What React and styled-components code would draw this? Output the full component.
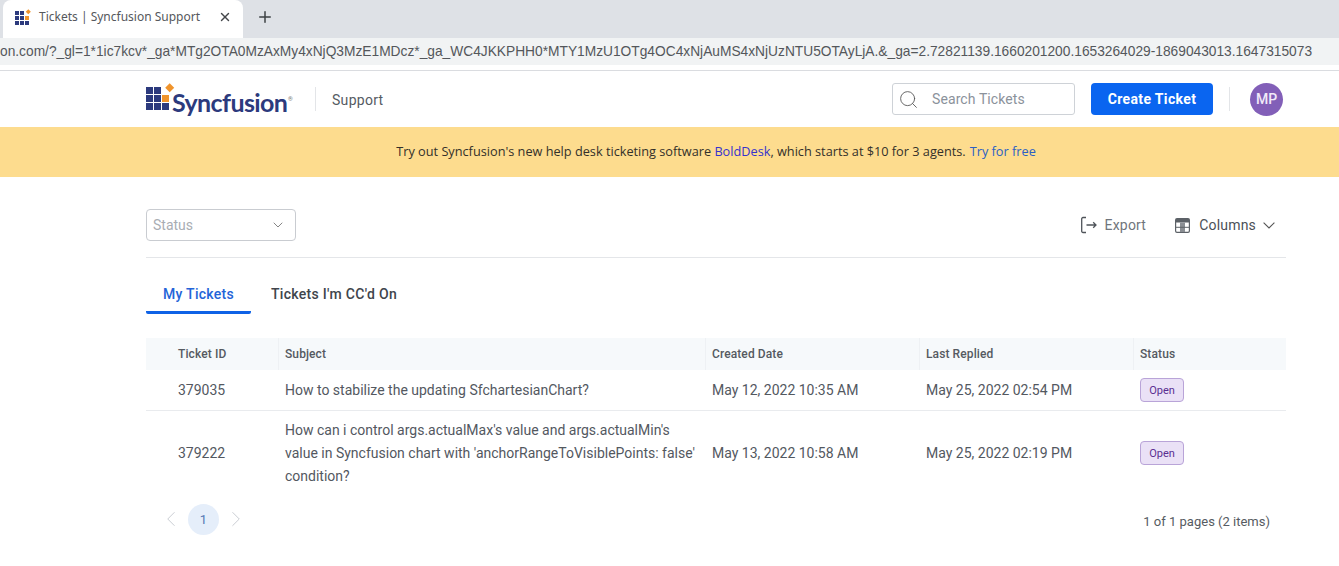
import React from 'react';
import styled, { createGlobalStyle } from 'styled-components';
import { ChevronDown, ChevronLeft, ChevronRight, Plus, Search, X } from 'lucide-react';

const GlobalStyle = createGlobalStyle`
  html, body {
    margin: 0;
    padding: 0;
    background: #fff;
    overflow: hidden;
  }
  * { box-sizing: border-box; }
  body { font-family: Roboto, "Liberation Sans", sans-serif; }
`;

const Page = styled.div`
  width: 1339px;
  height: 566px;
  overflow: hidden;
`;

const TabStrip = styled.div`
  height: 38px;
  background: #dee1e6;
  display: flex;
  align-items: flex-end;
  padding-left: 3px;
`;

const BrowserTab = styled.div`
  width: 240px;
  height: 38px;
  background: #fff;
  border-radius: 8px 8px 0 0;
  display: flex;
  align-items: center;
  padding: 0 11px 5px 12px;
  font-family: "Noto Sans", sans-serif;
  font-size: 12px;
  color: #55585c;
`;

const TabTitle = styled.span`
  margin-left: 8px;
  flex: 1;
`;

const NewTab = styled.div`
  margin: 0 0 5px 13px;
  height: 33px;
  display: flex;
  align-items: center;
  color: #3c4043;
`;

const AddressWrap = styled.div`
  height: 33px;
  background: #fff;
  border-bottom: 1px solid #dadce0;
`;

const AddressBar = styled.div`
  height: 27px;
  background: #f1f3f4;
  display: flex;
  align-items: center;
  white-space: nowrap;
  font-family: "Liberation Sans", sans-serif;
  font-size: 13.75px;
  color: #54575b;
`;

const TopNav = styled.header`
  height: 56px;
  display: flex;
  align-items: center;
  padding: 0 56px 0 146px;
`;

const LogoWrap = styled.div`
  width: 146px;
  position: relative;
  height: 32px;
`;

const LogoText = styled.span`
  position: absolute;
  left: 26px;
  top: 4px;
  font-family: Lato, sans-serif;
  font-weight: 700;
  font-size: 25px;
  letter-spacing: -0.6px;
  line-height: 30px;
  color: #2c3a7d;
`;

const LogoMark = styled.span`
  position: absolute;
  left: 142px;
  top: 13px;
  font-size: 6px;
  line-height: 1;
  color: #777;
`;

const NavDivider = styled.div`
  width: 1px;
  height: 24px;
  background: #e3e5e8;
  margin: 0 16px 0 23px;
`;

const NavLabel = styled.span`
  padding-top: 2px;
  font-size: 14px;
  letter-spacing: 0.3px;
  color: #555b63;
`;

const SearchBox = styled.div`
  margin-left: auto;
  width: 183px;
  height: 32px;
  border: 1px solid #ced2d7;
  border-radius: 3px;
  display: flex;
  align-items: center;
  padding-left: 5px;
  gap: 13px;
  font-size: 14px;
  color: #8b929b;
  letter-spacing: 0.1px;
`;

const CreateButton = styled.button`
  margin-left: 16px;
  width: 122px;
  height: 32px;
  border: 0;
  border-radius: 4px;
  background: #0a65f0;
  color: #fff;
  font: 700 14px Roboto, sans-serif;
  letter-spacing: 0.35px;
`;

const ButtonDivider = styled.div`
  width: 1px;
  height: 24px;
  background: #e3e5e8;
  margin: 0 20px 0 16px;
`;

const Avatar = styled.div`
  width: 33px;
  height: 33px;
  border-radius: 50%;
  background: #825fb8;
  color: #f1eaf8;
  display: flex;
  align-items: center;
  justify-content: center;
  font-weight: 500;
  font-size: 14px;
`;

const Banner = styled.div`
  height: 50px;
  background: #fddc8e;
  display: flex;
  align-items: center;
  justify-content: center;
  padding: 0 0 2px 93px;
  font-family: "Open Sans", "Noto Sans", sans-serif;
  font-size: 12.73px;
  color: #33302a;
`;

const BannerLink = styled.a`
  color: ${p => p.$tone};
  margin: ${p => p.$gap};
`;

const Content = styled.main`
  margin: 0 53px 0 146px;
`;

const FilterBar = styled.div`
  height: 81px;
  border-bottom: 1px solid #e4e6e9;
  display: flex;
  align-items: flex-start;
  padding: 32px 11px 0 0;
`;

const StatusSelect = styled.div`
  width: 150px;
  height: 32px;
  border: 1px solid #c9ccd1;
  border-radius: 4px;
  display: flex;
  align-items: center;
  justify-content: space-between;
  padding: 0 9px 0 6px;
  font-size: 14px;
  color: #a9adb3;
`;

const ToolButton = styled.div`
  display: flex;
  align-items: center;
  height: 32px;
  margin-left: ${p => p.$left || '29px'};
  gap: ${p => p.$gap || '8px'};
  font-size: 14px;
  letter-spacing: 0.2px;
  color: ${p => p.$muted ? '#70757c' : '#4b5057'};
`;

const ColumnsSvg = styled.svg`
  margin-right: 2px;
`;

const TabRow = styled.nav`
  display: flex;
  margin-top: 19px;
  height: 37px;
`;

const PageTab = styled.div`
  width: ${p => p.$width};
  padding-top: 9px;
  text-align: center;
  font-size: 14px;
  font-weight: 500;
  letter-spacing: 0.3px;
  color: ${p => p.$active ? '#2464d8' : '#40454c'};
  border-bottom: 3px solid ${p => p.$active ? '#0f62e6' : 'transparent'};
  border-radius: 0 0 2px 2px;
`;

const Grid = styled.div`
  display: grid;
  grid-template-columns: 132px 427px 214px 214px 1fr;
  align-items: center;
`;

const HeaderRow = styled(Grid)`
  margin-top: 24px;
  height: 32px;
  background: #f6f9fb;
  font-size: 12px;
  font-weight: 500;
  color: #555a61;
  letter-spacing: 0.1px;
`;

const HeaderCell = styled.div`
  height: 32px;
  line-height: 32px;
  padding-left: ${p => p.$first ? '32px' : '6px'};
  border-left: ${p => p.$first ? '0' : '1px solid #eef1f4'};
`;

const BodyRow = styled(Grid)`
  min-height: ${p => p.$tall ? '84px' : '41px'};
  border-bottom: ${p => p.$tall ? '0' : '1px solid #e9ebee'};
  font-size: 14px;
  color: #53585f;
`;

const Cell = styled.div`
  padding-left: ${p => p.$first ? '32px' : '7px'};
  padding-right: 4px;
  line-height: 23px;
`;

const StatusPill = styled.span`
  display: inline-flex;
  align-items: center;
  justify-content: center;
  width: 44px;
  height: 24px;
  border-radius: 4px;
  border: 1px solid #b9a4d8;
  background: #eae1f6;
  color: #5a2f91;
  font-size: 11px;
`;

const FooterRow = styled.div`
  display: flex;
  align-items: center;
  padding: 0 16px 0 12px;
  height: 48px;
`;

const PageDot = styled.div`
  width: 31px;
  height: 31px;
  border-radius: 50%;
  background: #e5eefa;
  color: #5878b4;
  display: flex;
  align-items: center;
  justify-content: center;
  font-size: 13px;
  margin: 0 4px;
`;

const PageInfo = styled.span`
  margin-left: auto;
  padding-top: 4px;
  font-size: 13px;
  color: #565b62;
`;

const Favicon = () => (
  <svg width="16" height="16" viewBox="0 0 16 16">
    <g fill="#2c3a7d">
      <rect x="0" y="2" width="4" height="4" />
      <rect x="5" y="2" width="4" height="4" />
      <rect x="0" y="7" width="4" height="4" />
      <rect x="5" y="7" width="4" height="4" />
      <rect x="0" y="12" width="4" height="4" />
      <rect x="5" y="12" width="4" height="4" />
      <rect x="10" y="12" width="4" height="4" />
    </g>
    <rect x="10" y="7" width="4" height="4" fill="#f0942c" />
    <rect x="11.5" y="1" width="3.6" height="3.6" fill="#f0942c" transform="rotate(45 13.3 2.8)" />
  </svg>
);

const LogoGrid = () => (
  <svg width="36" height="28" viewBox="0 0 36 28" style={{ position: 'absolute', left: 0, top: 0 }}>
    <g fill="#2c3a7d">
      <rect x="0" y="4" width="7" height="7" />
      <rect x="8" y="4" width="7" height="7" />
      <rect x="0" y="12" width="7" height="7" />
      <rect x="8" y="12" width="7" height="7" />
      <rect x="0" y="20" width="7" height="7" />
      <rect x="8" y="20" width="7" height="7" />
      <rect x="16" y="20" width="7" height="7" />
    </g>
    <rect x="16" y="12" width="7" height="7" fill="#f0942c" />
    <rect x="20.5" y="1.5" width="6.4" height="6.4" fill="#f0942c" transform="rotate(45 23.7 4.7)" />
  </svg>
);

const ExportIcon = () => (
  <svg width="16" height="18" viewBox="0 0 16 18" fill="none" stroke="#4f545a" strokeWidth="1.3">
    <path d="M5 1.5H2a1.3 1.3 0 0 0-1.3 1.3v12.4A1.3 1.3 0 0 0 2 16.5h3" />
    <path d="M5.5 9H15M12.2 6.2 15 9l-2.8 2.8" />
  </svg>
);

const ColumnsIcon = () => (
  <ColumnsSvg width="15" height="15" viewBox="0 0 15 15">
    <rect x="0.6" y="0.6" width="13.8" height="13.8" rx="1.4" fill="#fff" stroke="#5c6167" strokeWidth="1.2" />
    <rect x="1" y="1" width="13" height="3.5" fill="#5c6167" />
    <rect x="5" y="4.5" width="5" height="9.5" fill="#8a8e93" />
    <rect x="1" y="8.8" width="13" height="1" fill="#5c6167" />
  </ColumnsSvg>
);

const ColumnsCaret = () => (
  <svg width="12" height="7" viewBox="0 0 12 7" fill="none" stroke="#555" strokeWidth="1.1">
    <path d="M.6.6 6 6 11.4.6" />
  </svg>
);

const tickets = [
  {
    id: '379035',
    subject: 'How to stabilize the updating SfchartesianChart?',
    created: 'May 12, 2022 10:35 AM',
    replied: 'May 25, 2022 02:54 PM',
  },
  {
    id: '379222',
    subject: "How can i control args.actualMax's value and args.actualMin's value in Syncfusion chart with 'anchorRangeToVisiblePoints: false' condition?",
    created: 'May 13, 2022 10:58 AM',
    replied: 'May 25, 2022 02:19 PM',
    tall: true,
  },
];

const columns = ['Ticket ID', 'Subject', 'Created Date', 'Last Replied', 'Status'];

export default function App() {
  return (
    <Page>
      <GlobalStyle />
      <TabStrip>
        <BrowserTab>
          <Favicon />
          <TabTitle>Tickets | Syncfusion Support</TabTitle>
          <X size={14} strokeWidth={2.4} color="#44474b" />
        </BrowserTab>
        <NewTab>
          <Plus size={18} strokeWidth={2} />
        </NewTab>
      </TabStrip>
      <AddressWrap>
        <AddressBar>
          on.com/?_gl=1*1ic7kcv*_ga*MTg2OTA0MzAxMy4xNjQ3MzE1MDcz*_ga_WC4JKKPHH0*MTY1MzU1OTg4OC4xNjAuMS4xNjUzNTU5OTAyLjA.&amp;_ga=2.72821139.1660201200.1653264029-1869043013.1647315073
        </AddressBar>
      </AddressWrap>

      <TopNav>
        <LogoWrap>
          <LogoGrid />
          <LogoText>Syncfusion</LogoText>
          <LogoMark>®</LogoMark>
        </LogoWrap>
        <NavDivider />
        <NavLabel>Support</NavLabel>
        <SearchBox>
          <Search size={21} strokeWidth={1} color="#555" />
          <span>Search Tickets</span>
        </SearchBox>
        <CreateButton>Create Ticket</CreateButton>
        <ButtonDivider />
        <Avatar>MP</Avatar>
      </TopNav>

      <Banner>
        Try out Syncfusion's new help desk ticketing software&nbsp;
        <BannerLink $tone="#3533cd">BoldDesk</BannerLink>, which starts at $10 for 3 agents.
        <BannerLink $tone="#2b5fc4" $gap="0 0 0 4px">Try for free</BannerLink>
      </Banner>

      <Content>
        <FilterBar>
          <StatusSelect>
            <span>Status</span>
            <ChevronDown size={16} strokeWidth={1.2} color="#666" />
          </StatusSelect>
          <ToolButton $muted $left="auto">
            <ExportIcon />
            <span>Export</span>
          </ToolButton>
          <ToolButton $gap="7px">
            <ColumnsIcon />
            <span>Columns</span>
            <ColumnsCaret />
          </ToolButton>
        </FilterBar>

        <TabRow>
          <PageTab $active $width="105px">My Tickets</PageTab>
          <PageTab $width="166px">Tickets I'm CC'd On</PageTab>
        </TabRow>

        <HeaderRow>
          {columns.map((name, i) => (
            <HeaderCell key={name} $first={i === 0}>{name}</HeaderCell>
          ))}
        </HeaderRow>

        {tickets.map(t => (
          <BodyRow key={t.id} $tall={t.tall}>
            <Cell $first>{t.id}</Cell>
            <Cell>{t.subject}</Cell>
            <Cell>{t.created}</Cell>
            <Cell>{t.replied}</Cell>
            <Cell><StatusPill>Open</StatusPill></Cell>
          </BodyRow>
        ))}

        <FooterRow>
          <ChevronLeft size={26} strokeWidth={0.9} color="#c8ccd2" />
          <PageDot>1</PageDot>
          <ChevronRight size={26} strokeWidth={0.9} color="#c8ccd2" />
          <PageInfo>1 of 1 pages (2 items)</PageInfo>
        </FooterRow>
      </Content>
    </Page>
  );
}
